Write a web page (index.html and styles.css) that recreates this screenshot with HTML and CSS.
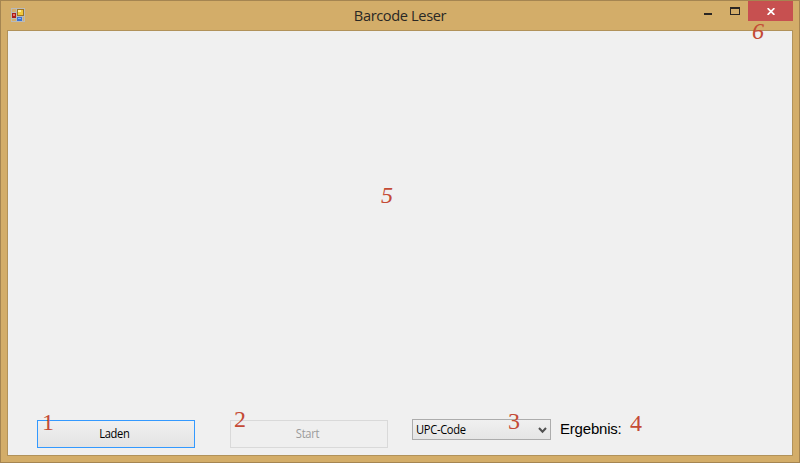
FILE: index.html
```html
<!DOCTYPE html>
<html lang="de">
<head>
<meta charset="utf-8">
<title>Barcode Leser</title>
<link rel="stylesheet" href="styles.css">
</head>
<body>
<div class="window">
  <header class="titlebar">
    <svg class="app-icon" width="14" height="14" viewBox="0 0 14 14">
      <path fill="#b9babb" d="M0 0h14v14H0z"/>
      <path fill="#d3ae6c" d="M1 1h4v3H1zM1 11h4v2H1zM12 9h1v4h-1z"/>
      <path fill="#a91d1c" d="M1 5h4v5H1z"/><path fill="#e8736a" d="M2 6h2v2H2z"/>
      <path fill="#9b7324" d="M6 1h7v7H6z"/><path fill="#f1c83c" d="M7 2h5v5H7z"/><path fill="#fbeaa0" d="M7 2h3v2H7z"/>
      <path fill="#3b72d4" d="M6 9h5v4H6z"/><path fill="#86b2f5" d="M7 10h3v1H7z"/>
    </svg>
    <h1 class="title">Barcode Leser</h1>
    <div class="controls">
      <span class="control minimize"><svg width="8" height="3"><path fill="#2a2623" d="M0 0h8v2H0z"/></svg></span>
      <span class="control maximize"><svg width="10" height="8"><path fill="#2a2623" fill-rule="evenodd" d="M0 0h10v8H0zM1 2v5h8V2z"/></svg></span>
      <span class="control close"><svg width="8" height="7" viewBox="0 0 8 7"><path stroke="#fff" stroke-width="1.8" d="M.6.2l6.8 6.6M7.4.2L.6 6.8"/></svg></span>
    </div>
  </header>
  <main class="client">
    <div class="picture"></div>
    <div class="toolbar">
      <button class="btn focused"><span>Laden</span></button>
      <button class="btn disabled" disabled><span>Start</span></button>
      <div class="combo"><span>UPC-Code</span><svg width="9" height="7" viewBox="0 0 9 7"><path d="M1 1l3.5 3.8L8 1" fill="none" stroke="#505050" stroke-width="2"/></svg></div>
      <span class="result">Ergebnis:</span>
    </div>
  </main>
  <span class="note n1">1</span>
  <span class="note n2">2</span>
  <span class="note n3">3</span>
  <span class="note n4">4</span>
  <span class="note italic n5">5</span>
  <span class="note italic n6">6</span>
</div>
</body>
</html>
```
FILE: styles.css
```css
* { box-sizing: border-box; }
body { margin: 0; }
.window {
  position: relative;
  display: flex;
  flex-direction: column;
  width: 800px;
  height: 463px;
  padding: 0 6px 6px;
  border: 1px solid #a58551;
  background: #d3ad69;
}
.titlebar {
  display: grid;
  grid-template-columns: 100px 1fr 100px;
  height: 29px;
}
.app-icon { margin: 7px 0 0 4px; }
.title {
  margin: 0;
  padding-top: 4px;
  font: 400 15px/21px "Open Sans", "Noto Sans", sans-serif;
  letter-spacing: -0.4px;
  text-align: center;
  color: #2a2825;
  transform: scaleX(0.975);
}
.controls { display: flex; height: 20px; }
.control { display: flex; justify-content: center; }
.minimize { width: 29px; padding: 12px 0 0 1px; }
.maximize { width: 26px; padding-top: 6px; }
.close { width: 45px; background: #c75050; align-items: center; padding-top: 1px; }
.client {
  display: flex;
  flex-direction: column;
  flex: 1;
  border: 1px solid #b1925a;
  background: #f0f0f0;
}
.picture { flex: 1; }
.toolbar {
  display: flex;
  height: 37px;
  padding-left: 29px;
  font: 12px/16px "Open Sans", "Noto Sans", sans-serif;
  letter-spacing: -0.35px;
}
.btn {
  width: 158px;
  height: 28px;
  margin: 2px 35px 0 0;
  padding: 0 4px 0 0;
  border: 1px solid #3399ff;
  background: linear-gradient(#f0f0f0, #e3e3e3);
  font: inherit;
  letter-spacing: inherit;
  color: #000;
}
.btn span, .combo span { display: inline-block; transform: scaleX(.93); }
.btn.disabled { margin-right: 24px; border-color: #d9d9d9; background: #efefef; color: #9b9b9b; }
.combo {
  display: flex;
  align-items: center;
  justify-content: space-between;
  width: 139px;
  height: 21px;
  margin-top: 1px;
  padding: 0 4px 0 3px;
  border: 1px solid #acacac;
  background: linear-gradient(#f0f0f0, #e5e5e5);
}
.combo span { transform-origin: left; }
.combo svg { margin: 1px -1px 0 0; }
.result {
  margin: 1px 0 0 9px;
  font: 15px/20px "Liberation Sans", Arial, sans-serif;
  letter-spacing: -0.2px;
}
.note {
  position: absolute;
  font: 24px/24px "Liberation Serif", "Times New Roman", serif;
  color: #c44a35;
}
.italic { font-style: italic; }
.n1 { left: 41px; top: 409px; }
.n2 { left: 233px; top: 406px; }
.n3 { left: 507px; top: 408px; }
.n4 { left: 629px; top: 410px; }
.n5 { left: 380px; top: 182px; }
.n6 { left: 751px; top: 18px; }
```
